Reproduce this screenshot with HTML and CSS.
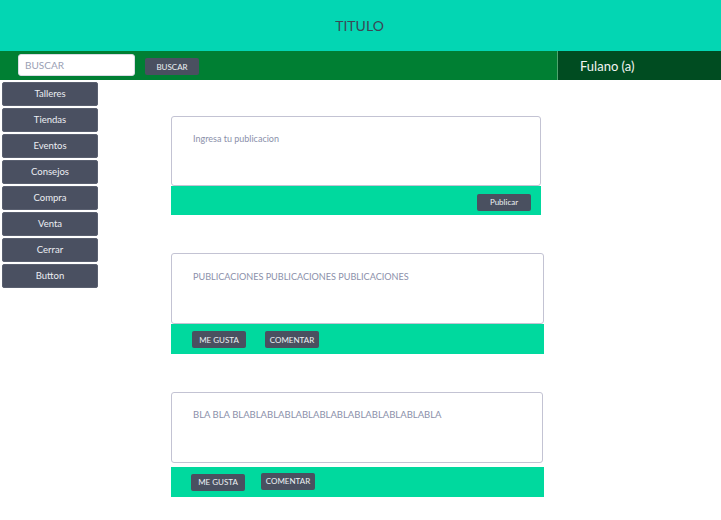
FILE: index.html
```html
<!DOCTYPE html>
<html lang="es">
<head>
<meta charset="utf-8">
<title>Titulo</title>
<link rel="stylesheet" href="styles.css">
</head>
<body>
<header class="header">TITULO</header>
<nav class="navbar">
  <div class="nav-left">
    <input class="search-input" type="text" placeholder="BUSCAR">
    <button class="btn btn-search">BUSCAR</button>
  </div>
  <div class="nav-user">Fulano (a)</div>
</nav>
<div class="main">
  <aside class="sidebar">
    <button class="side-btn">Talleres</button>
    <button class="side-btn">Tiendas</button>
    <button class="side-btn">Eventos</button>
    <button class="side-btn">Consejos</button>
    <button class="side-btn">Compra</button>
    <button class="side-btn">Venta</button>
    <button class="side-btn">Cerrar</button>
    <button class="side-btn">Button</button>
  </aside>
  <section class="feed">
    <div class="card composer">
      <div class="card-body"><span class="card-text">Ingresa tu publicacion</span></div>
      <div class="card-foot foot-right"><button class="btn btn-pub">Publicar</button></div>
    </div>
    <div class="card post post1">
      <div class="card-body"><span class="card-text upper narrow">PUBLICACIONES PUBLICACIONES PUBLICACIONES</span></div>
      <div class="card-foot"><button class="btn btn-act">ME GUSTA</button><button class="btn btn-act">COMENTAR</button></div>
    </div>
    <div class="card post post2">
      <div class="card-body"><span class="card-text upper">BLA BLA BLABLABLABLABLABLABLABLABLABLABLABLA</span></div>
      <div class="card-foot foot-gap"><button class="btn btn-act">ME GUSTA</button><button class="btn btn-act btn-up">COMENTAR</button></div>
    </div>
  </section>
</div>
</body>
</html>
```

FILE: styles.css
```css
* { box-sizing: border-box; }
body {
  margin: 0;
  font-family: Lato, "Liberation Sans", sans-serif;
  background: #ffffff;
  width: 721px;
}
.header {
  height: 51px;
  background: #03d6b3;
  color: #3a4856;
  font-size: 14px;
  display: flex;
  align-items: center;
  justify-content: center;
  padding-right: 2px;
  padding-bottom: 1px;
}
.navbar {
  height: 29px;
  display: flex;
  background: #007f33;
}
.nav-left {
  width: 557px;
  display: flex;
  align-items: center;
  padding-left: 18px;
}
.search-input {
  width: 117px;
  height: 22px;
  border: 1px solid #d8dbe4;
  border-radius: 3px;
  background: #ffffff;
  padding: 0 0 0 6px;
  font-family: Lato, "Liberation Sans", sans-serif;
  font-size: 10px;
  outline: none;
  margin-top: -1px;
}
.search-input::placeholder { color: #9aa0b4; }
.btn {
  border: none;
  background: #4a5060;
  color: #eef0f4;
  font-family: Lato, "Liberation Sans", sans-serif;
  font-size: 8px;
  border-radius: 2px;
  padding: 0;
  cursor: pointer;
}
.btn-search {
  width: 54px;
  height: 17px;
  margin-left: 10px;
  margin-top: 2px;
}
.nav-user {
  flex: 1;
  background: #004c21;
  border-left: 1px solid #4fa56f;
  color: #f2f5f2;
  font-size: 13px;
  display: flex;
  align-items: center;
  padding-left: 22px;
}
.main {
  display: flex;
  padding-top: 2px;
}
.sidebar {
  width: 96px;
  margin-left: 2px;
  display: flex;
  flex-direction: column;
  gap: 2px;
}
.side-btn {
  height: 24px;
  background: #4a5061;
  color: #eceef3;
  border: 1px solid #5a6070;
  border-radius: 2px;
  font-family: Lato, "Liberation Sans", sans-serif;
  font-size: 9.5px;
  padding: 0 0 2px;
}
.feed {
  margin-left: 73px;
  padding-top: 34px;
  display: flex;
  flex-direction: column;
}
.card-body {
  height: 71px;
  border: 1px solid #c3c3d3;
  border-radius: 3px;
  background: #ffffff;
  padding: 9px 21px 0;
}
.card-text {
  font-size: 9px;
  color: #8b90aa;
}
.upper { font-size: 9.5px; }
.narrow { font-size: 9.1px; }
.card-foot {
  height: 30px;
  background: #00d99e;
  display: flex;
  align-items: center;
  padding-left: 21px;
  gap: 19px;
}
.composer { width: 370px; }
.composer .card-body { height: 70px; padding-top: 9px; }
.composer .card-foot { height: 29px; }
.foot-right { justify-content: flex-end; padding-right: 10px; }
.btn-pub { width: 54px; height: 17px; margin-top: 3px; }
.post1 { width: 373px; margin-top: 38px; }
.post1 .card-body { padding-top: 10px; }
.post2 { width: 373px; margin-top: 38px; }
.post2 .card-body { width: 372px; height: 71px; padding-top: 9px; }
.post2 .card-foot { margin-top: 4px; padding-left: 20px; gap: 16px; }
.btn-act { width: 54px; height: 17px; font-size: 8px; }
.post1 .btn-act { margin-top: 1px; }
.btn-up { margin-top: -2px; }
```
